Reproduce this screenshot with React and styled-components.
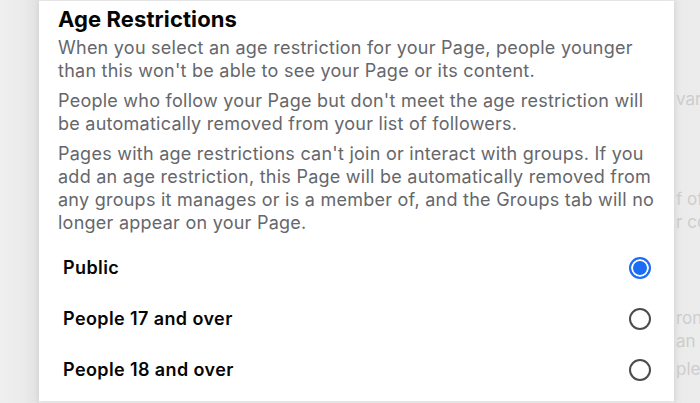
import styled, { createGlobalStyle } from 'styled-components'

const GlobalStyle = createGlobalStyle`
  html, body {
    margin: 0;
    padding: 0;
    background: #ececec;
  }
  body {
    font-family: Inter, "Noto Sans", "Liberation Sans", sans-serif;
    -webkit-font-smoothing: antialiased;
  }
`

const notes = [
  'When you select an age restriction for your Page, people younger than this won\'t be able to see your Page or its content.',
  'People who follow your Page but don\'t meet the age restriction will be automatically removed from your list of followers.',
  'Pages with age restrictions can\'t join or interact with groups. If you add an age restriction, this Page will be automatically removed from any groups it manages or is a member of, and the Groups tab will no longer appear on your Page.',
]

const choices = [
  { label: 'Public', checked: true },
  { label: 'People 17 and over', checked: false },
  { label: 'People 18 and over', checked: false },
]

// the page lying under the sheet, only its right edge shows
const behind = [
  { text: 'var', top: 88 },
  { text: 'f of', top: 188 },
  { text: 'r co', top: 211 },
  { text: 'ron', top: 307 },
  { text: 'an', top: 330 },
  { text: 'ple', top: 358 },
]

const App = () => {
  return (
    <>
      <GlobalStyle />
      <Stage>
        <Gutter />
        <Sheet>
          <Title>Age Restrictions</Title>
          {notes.map((n, i) => (
            <Note key={i}>{n}</Note>
          ))}
          <Options>
            {choices.map((c) => (
              <Option key={c.label}>
                <span>{c.label}</span>
                <Radio $checked={c.checked} />
              </Option>
            ))}
          </Options>
        </Sheet>
        <Backdrop>
          {behind.map((b) => (
            <Faded key={b.text} $top={b.top}>{b.text}</Faded>
          ))}
        </Backdrop>
      </Stage>
    </>
  )
}

export default App

const Stage = styled.div`
  display: grid;
  grid-template-columns: 39px 635px 1fr;
  height: 403px;
  overflow: hidden;
  background: #ececec;
`

const Gutter = styled.div`
  background: linear-gradient(to right, #efefef 0%, #ebebeb 60%, #e1e1e1 100%);
`

const Sheet = styled.section`
  background: #fff;
  margin: 1px 0 2px;
  padding: 4px 0 0 19px;
  box-shadow: 0 0 6px rgba(0, 0, 0, 0.08);
  position: relative;
  z-index: 1;
`

const Title = styled.h2`
  margin: 0 0 3px;
  font-size: 22px;
  line-height: 28px;
  font-weight: 700;
  color: #050505;
  letter-spacing: 0.1px;
`

const Note = styled.p`
  margin: 0 0 7px;
  padding-right: 12px;
  font-size: 18px;
  line-height: 23px;
  letter-spacing: 0.25px;
  color: #65676b;
`

const Options = styled.div`
  margin-top: 8px;
  display: flex;
  flex-direction: column;
`

const Option = styled.label`
  display: flex;
  align-items: center;
  justify-content: space-between;
  height: 51px;
  padding: 0 23px 0 5px;
  font-size: 18px;
  font-weight: 600;
  letter-spacing: 0.4px;
  color: #050505;
`

const Radio = styled.span`
  box-sizing: border-box;
  width: 22px;
  height: 22px;
  border-radius: 50%;
  border: 2px solid ${(p) => (p.$checked ? '#1b6ef3' : '#4b4c4f')};
  background: ${(p) => (p.$checked ? '#1b6ef3' : '#fff')};
  box-shadow: ${(p) => (p.$checked ? 'inset 0 0 0 2px #fff' : 'none')};
`

const Backdrop = styled.div`
  position: relative;
  background: linear-gradient(to right, #e4e4e4 0%, #ebebeb 30%, #ececec 100%);
`

const Faded = styled.span`
  position: absolute;
  left: 2px;
  top: ${(p) => p.$top}px;
  font-size: 17px;
  line-height: 23px;
  color: #cdcdcd;
  white-space: nowrap;
`
